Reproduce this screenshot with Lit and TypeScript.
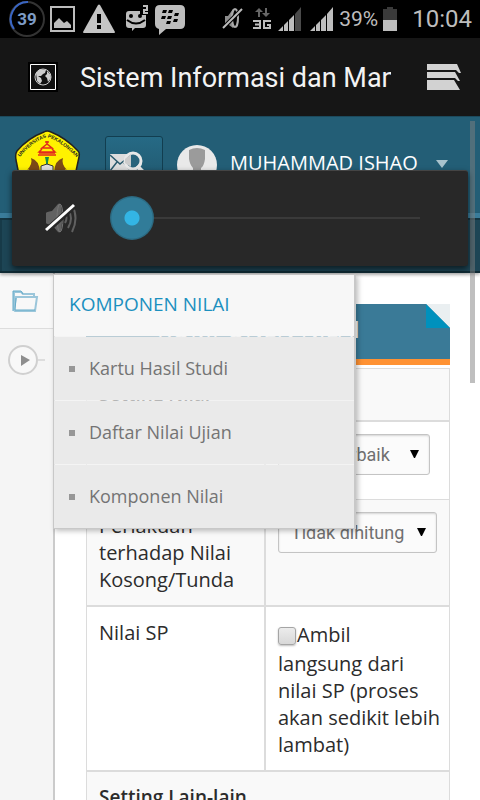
import { LitElement, html, css, svg } from "lit";
import { customElement } from "lit/decorators.js";

const signal = (last: string) => svg`
  <path d="M0 24 L5 19 V24Z M6 18 L10 14 V24 H6Z M11 13 L16 8 V24 H11Z" fill="#bdbdbd"/>
  <path d="M17 7 L23 0 V24 H17Z" fill=${last}/>`;

@customElement("status-bar")
export class StatusBar extends LitElement {
  static styles = css`
    :host {
      display: flex;
      align-items: center;
      justify-content: space-between;
      height: 38px;
      padding: 0 8px;
      background: #000;
      color: #bdbdbd;
      font-family: Roboto, sans-serif;
      flex: none;
    }
    .group {
      display: flex;
      align-items: center;
      gap: 5px;
    }
    svg {
      display: block;
      flex: none;
    }
    .percent {
      font-size: 21px;
      line-height: 38px;
    }
    .clock {
      font-size: 24px;
      line-height: 38px;
      padding-left: 10px;
    }
    .ring {
      font: 700 17px Roboto, sans-serif;
    }
  `;
  render() {
    return html`
      <div class="group">
        <svg width="37" height="38" viewBox="0 0 37 38">
          <circle cx="19" cy="19" r="17" fill="none" stroke="#333" stroke-width="2" />
          <path d="M20 2 A17 17 0 0 0 6 29" fill="none" stroke="#3a66c4" stroke-width="2" />
          <text class="ring" x="19" y="25" text-anchor="middle" fill="#7d9cc6">39</text>
        </svg>
        <svg width="25" height="26" viewBox="0 0 25 26">
          <path d="M1 1H24V25H1Z" fill="none" stroke="#bdbdbd" stroke-width="2" />
          <path d="M4 22V17L9 12L14 17L17 15L21 19V22Z" fill="#bdbdbd" />
        </svg>
        <svg width="40" height="30" viewBox="-1 0 40 30">
          <path d="M17 1Q18 0 19 1L34 28Q34 29 33 29H3Q2 29 2 28Z" fill="#c4c4c4" />
          <path d="M16 10H20V19H16Z M16 21H20V25H16Z" fill="#000" />
        </svg>
        <svg width="25" height="28" viewBox="0 0 25 28">
          <path d="M4 6H15V10H21V20Q21 23 18 23H10L7 26V23H4Q1 23 1 20V9Q1 6 4 6Z" fill="#bdbdbd" />
          <circle cx="6" cy="11" r="2" fill="#000" />
          <circle cx="15" cy="11" r="2" fill="#000" />
          <path d="M2 15Q11 22 20 15" fill="none" stroke="#000" stroke-width="2" />
          <path d="M18 1H22V5H19V8H23" fill="none" stroke="#bdbdbd" stroke-width="2" />
        </svg>
        <svg width="30" height="31" viewBox="0 0 30 31">
          <path d="M5 1H25Q30 1 30 6V20Q30 25 25 25H11L4 31V25Q0 24 0 20V6Q0 1 5 1Z" fill="#bdbdbd" />
          <path d="M8 6h4l-1 3h-4z M14 6h4l-1 3h-4z M7 12h4l-1 3h-4z M13 12h4l-1 3h-4z M20 9h4l-1 3h-4z M12 17h4l-1 3h-4z M19 15h4l-1 3h-4z" fill="#000" />
        </svg>
      </div>
      <div class="group">
        <svg width="26" height="26" viewBox="0 0 26 26">
          <path d="M3 10H6L11 3V22L7 19H3Z" fill="#8c8c8c" />
          <ellipse cx="13" cy="12" rx="3" ry="9" fill="none" stroke="#aaa" stroke-width="2" />
          <path d="M1 22L20 3" stroke="#000" stroke-width="4" />
          <path d="M1 22L20 3" stroke="#bdbdbd" stroke-width="2" />
        </svg>
        <svg width="19" height="22" viewBox="0 0 19 22">
          <path d="M6 0L10 4H7V9H5V4H2Z M13 9L9 5H12V0H14V5H17Z" fill="#666" />
          <path d="M0 13H7V20H0 M2 16.500H7 M18 13H11V20H17V17H14" fill="none" stroke="#bdbdbd" stroke-width="2" />
        </svg>
        <svg width="28" height="24" viewBox="-1 0 28 24">${signal("#4a4a4a")}</svg>
        <svg width="24" height="24" viewBox="0 0 24 24">${signal("#bdbdbd")}</svg>
        <span class="percent">39%</span>
        <svg width="14" height="24" viewBox="0 0 14 24">
          <path d="M0 2H4V0H10V2H14V13H0Z" fill="#3a3a3a" />
          <path d="M0 13H14V24H0Z" fill="#bdbdbd" />
        </svg>
        <span class="clock">10:04</span>
      </div>
    `;
  }
}

@customElement("volume-panel")
export class VolumePanel extends LitElement {
  static styles = css`
    :host {
      display: flex;
      align-items: center;
      box-sizing: border-box;
      height: 96px;
      padding: 0 26px 2px 32px;
      gap: 31px;
      background: #282828;
      border-top: 1px solid #444;
      border-radius: 3px;
      box-shadow: 0 3px 6px rgba(0, 0, 0, 0.6);
    }
    svg {
      flex: none;
    }
    input {
      appearance: none;
      flex: 1;
      min-width: 0;
      height: 44px;
      margin: 0;
      background: linear-gradient(#3a3a3a, #3a3a3a) center / calc(100% - 44px) 2px no-repeat;
    }
    input::-webkit-slider-thumb {
      appearance: none;
      width: 44px;
      height: 44px;
      border-radius: 50%;
      background: radial-gradient(circle, #33b5e5 7px, #317c99 8px, #317c99 20px, #2b6a82 21px);
    }
  `;
  render() {
    return html`
      <svg width="35" height="34" viewBox="0 0 35 34">
        <path d="M2 12Q2 11 8 10L14 3Q18 0 18 17Q18 34 14 31L8 24Q2 23 2 22Z" fill="#626262" />
        <ellipse cx="16" cy="17" rx="3" ry="14" fill="none" stroke="#757575" />
        <path d="M21 12Q24 17 21 22 M24 8Q30 17 24 27 M28 4Q35 17 28 31" fill="none" stroke="#606060" stroke-width="2" />
        <path d="M1 31L30 5" stroke="#282828" stroke-width="6" />
        <path d="M2 29L30 4" stroke="#fff" stroke-width="3" />
      </svg>
      <input type="range" min="0" max="15" value="0" aria-label="Volume" />
    `;
  }
}

@customElement("app-root")
export class AppRoot extends LitElement {
  static styles = css`
    :host {
      display: flex;
      flex-direction: column;
      height: 100vh;
      overflow: hidden;
      position: relative;
      background: #fff;
      color: #2c2c2c;
      font-family: "Open Sans", sans-serif;
      font-size: 20px;
      line-height: 27px;
    }
    button {
      border: 0;
      padding: 0;
      background: none;
      font: inherit;
    }
    svg {
      display: block;
      flex: none;
    }
    .appbar {
      flex: none;
      display: flex;
      align-items: center;
      height: 78px;
      padding: 0 18px 0 28px;
      background: #161616;
      color: #f3f3f3;
      font: 27px/40px Roboto, sans-serif;
    }
    .appbar .title {
      flex: 1;
      min-width: 0;
      margin: 0 35px 0 22px;
      padding-top: 2px;
      font: inherit;
      overflow: hidden;
      white-space: nowrap;
    }
    .web {
      position: relative;
      flex: 1;
      min-height: 0;
      display: flex;
      flex-direction: column;
    }
    .header {
      flex: none;
      display: flex;
      height: 97px;
      box-sizing: border-box;
      padding: 13px 30px 0 14px;
      background: #235e76;
      border-top: 1px solid #1c4a5d;
      overflow: hidden;
    }
    .mail {
      display: flex;
      align-items: flex-start;
      box-sizing: border-box;
      width: 58px;
      height: 58px;
      margin: 6px 14px 0 24px;
      padding: 14px 0 0 3px;
      border: 1px solid #123e50;
      border-radius: 3px;
      background: linear-gradient(#266a85, #205469);
    }
    .account {
      flex: 1;
      display: flex;
      align-items: flex-start;
      gap: 12px;
      padding-top: 15px;
      color: #fff;
      text-align: left;
      height: 60px;
    }
    .account .name {
      flex: 1;
      padding-top: 4px;
      white-space: nowrap;
    }
    .account .caret {
      margin: 15px 2px 0 0;
    }
    .nav {
      flex: none;
      box-sizing: border-box;
      height: 60px;
      border-top: 5px solid #3a7c9a;
      border-bottom: 2px solid #102b35;
      background: #1d4555;
      box-shadow: inset 0 2px #143440, inset 2px 0 #173a48, 0 2px 3px rgba(0, 0, 0, 0.3);
      z-index: 1;
    }
    .body {
      flex: 1;
      min-height: 0;
      display: flex;
      overflow: hidden;
    }
    .side {
      flex: none;
      box-sizing: border-box;
      width: 55px;
      border-right: 2px solid #cbcbcb;
      background: #f5f5f5;
    }
    .side button {
      display: block;
      box-sizing: border-box;
      width: 100%;
    }
    .side .folder {
      height: 56px;
      padding: 2px 0 0 12px;
      border-bottom: 1px solid #ddd;
      background: #f8f8f8;
    }
    .side .play {
      padding: 15px 0 0 8px;
    }
    .content {
      flex: 1;
      min-width: 0;
      padding: 31px 30px 0 31px;
    }
    .banner {
      display: flex;
      justify-content: space-between;
      box-sizing: border-box;
      height: 61px;
      margin-bottom: 3px;
      background: #3a7a97;
      border-bottom: 6px solid #ff9233;
    }
    .banner h2 {
      margin: 0;
      padding: 8px 0 0 71px;
      color: #fff;
      font-size: 24px;
      line-height: 34px;
      font-weight: 400;
      white-space: nowrap;
    }
    table {
      width: 100%;
      border-collapse: separate;
      border-spacing: 0;
      border: 1px solid #dcdcdc;
      border-bottom: 0;
      table-layout: fixed;
    }
    th,
    td {
      text-align: left;
      vertical-align: top;
      font-weight: 400;
      padding: 12px 8px 12px 12px;
      border-bottom: 2px solid #dcdcdc;
    }
    .names {
      width: 179px;
    }
    .label {
      border-right: 2px solid #dcdcdc;
    }
    .thin th,
    .thin td {
      border-bottom-width: 1px;
    }
    .shade {
      background: #f9f9f9;
    }
    .section {
      font-size: 19px;
      font-weight: 600;
    }
    .pick {
      position: relative;
      display: inline-block;
      vertical-align: top;
    }
    .pick svg {
      position: absolute;
      right: 11px;
      top: 15px;
      pointer-events: none;
    }
    select {
      appearance: none;
      box-sizing: border-box;
      height: 41px;
      padding: 0 31px 0 12px;
      border: 1px solid #c4c4c4;
      border-radius: 3px;
      background: #fbfbfb;
      color: #707070;
      font: 18px Roboto, sans-serif;
      box-shadow: inset 0 1px 2px rgba(0, 0, 0, 0.15);
    }
    .thin .pick {
      margin-bottom: 12px;
    }
    .thin select {
      padding-right: 38px;
    }
    .first {
      line-height: 31px;
    }
    input[type="checkbox"] {
      appearance: none;
      box-sizing: border-box;
      width: 18px;
      height: 18px;
      margin: 0 1px 0 0;
      vertical-align: -3px;
      border: 1px solid #a5a5a5;
      border-radius: 3px;
      background: linear-gradient(#ececec, #d8d8d8);
      box-shadow: 0 1px 2px rgba(0, 0, 0, 0.25);
    }
    .menu {
      position: absolute;
      z-index: 1;
      left: 53px;
      top: 158px;
      box-sizing: border-box;
      width: 303px;
      border: 1px solid #c8c8c8;
      border-right-width: 2px;
      box-shadow: 2px 2px 5px rgba(0, 0, 0, 0.25);
    }
    .menu h3 {
      margin: 0;
      padding: 15px 15px 18px;
      background: #f7f7f7;
      color: #1c90bf;
      font-size: 19px;
      line-height: 28px;
      font-weight: 400;
    }
    .menu ul {
      display: grid;
      gap: 1px;
      margin: 0;
      padding: 1px 0 0;
      list-style: none;
      background: rgba(240, 240, 240, 0.7);
    }
    .menu a {
      display: flex;
      align-items: center;
      gap: 14px;
      height: 63px;
      padding-left: 15px;
      background: #eaeaea;
      color: #747474;
      font-size: 18px;
      text-decoration: none;
    }
    .menu a::before {
      content: "";
      width: 6px;
      height: 6px;
      background: #979797;
    }
    volume-panel {
      position: absolute;
      z-index: 3;
      top: 54px;
      left: 12px;
      right: 12px;
    }
    .scroll {
      position: absolute;
      z-index: 2;
      top: 5px;
      right: 5px;
      width: 5px;
      height: 262px;
      background: rgba(128, 128, 128, 0.5);
    }
  `;

  private select(id: string, value: string) {
    return html`<span class="pick">
      <select id=${id}><option>${value}</option></select>
      <svg width="9" height="10" viewBox="0 0 9 10"><path d="M0 1H9L5 9H4Z" fill="#000" /></svg>
    </span>`;
  }

  render() {
    return html`
      <status-bar></status-bar>
      <header class="appbar">
        <svg width="30" height="30" viewBox="0 0 30 30">
          <path d="M1 1H29V29H1Z" fill="none" stroke="#000" stroke-width="2" />
          <path d="M2.500 2.500H27.500V27.500H2.500Z" fill="#111" stroke="#fff" />
          <circle cx="15" cy="15" r="8" fill="none" stroke="#ccc" />
          <path d="M8 11L12 7L18 8L17 11L15 12L13 14L10 14L13 16L14 19L12 22L9 19Z M19 9L22 12L23 16L20 20L19 16L17 14L19 12Z" fill="#ccc" />
        </svg>
        <h1 class="title">Sistem Informasi dan Manajemen</h1>
        <button aria-label="Jendela">
          <svg width="36" height="28" viewBox="0 0 36 28">
            <path d="M1 1H31L35 10H33L30 7H1Z M1 9H29L34 18H32L29 15H1Z M1 17H28L34 27H1Z" fill="#d2d2d2" />
          </svg>
        </button>
      </header>
      <div class="web">
        <header class="header">
          <svg width="67" height="70" viewBox="0 0 67 70">
            <path d="M30 2Q33 0 37 2Q52 8 64 21Q66 23 65 27L58 60Q33 76 8 60L2 30Q1 24 3 21Q14 8 30 2Z" fill="#fff200" stroke="#222" stroke-width="1.500" />
            <defs><path id="arc" d="M6 27Q18 12 33 7Q48 12 64 29" /></defs>
            <text font-family="Liberation Sans, sans-serif" font-size="5" font-weight="700" fill="#222">
              <textPath href="#arc" startOffset="0">UNIVERSITAS PEKALONGAN</textPath>
            </text>
            <path d="M33 11V14 M31 12H35 M33 14L28 18H38Z M28 19L25 22H41L38 19 M25 23H41 M24 25H42" fill="none" stroke="#e22a1c" stroke-width="1.500" />
            <path d="M31 27H35L34 32V38H32V32Z" fill="#148a4b" />
            <path d="M17 28Q25 30 26 42H14Q16 38 13 40Q19 34 17 28Z M49 28Q41 30 40 42H52Q50 38 53 40Q47 34 49 28Z" fill="#7b4a16" />
            <path d="M27 36L33 34L39 36V44H27Z" fill="#ddd" stroke="#333" />
          </svg>
          <button class="mail" aria-label="Cari pesan">
            <svg width="36" height="26" viewBox="0 0 36 26">
              <path d="M1 3H22V23H1Z" fill="#ddd" />
              <path d="M1 4L11 13L22 4 M1 20L8 11 M22 20L15 12" fill="none" stroke="#2b5a6d" stroke-width="1.500" />
              <circle cx="24" cy="10" r="8" fill="#2a647c" stroke="#e8e8e8" stroke-width="3" />
              <path d="M16 8L22 3V16L16 12Z" fill="#ccc" />
              <path d="M28 15L34 21" stroke="#e8e8e8" stroke-width="4" />
            </svg>
          </button>
          <button class="account">
            <svg width="41" height="41" viewBox="0 0 41 41">
              <circle cx="20" cy="20" r="20" fill="#e9e9e9" />
              <path d="M12 5Q20 1 28 5V14Q27 21 24 23V27L32 32H8L16 27V23Q13 20 12 14Z" fill="#9b9b9b" />
            </svg>
            <span class="name">MUHAMMAD ISHAQ</span>
            <svg class="caret" width="12" height="8" viewBox="0 0 12 8"><path d="M0 0H12L6 8Z" fill="#a9c3cd" /></svg>
          </button>
        </header>
        <nav class="nav"></nav>
        <div class="body">
          <aside class="side">
            <button class="folder" aria-label="Berkas">
              <svg width="27" height="23" viewBox="0 0 27 23">
                <path d="M2 20V2H9L11 4H22V7 M2 20L4 7H25L23 21H3Z" fill="none" stroke="#9bc6da" stroke-width="2" />
                <path d="M1 21V1H9L11 4 M4 8L3 20H23" fill="none" stroke="#65abc9" />
              </svg>
            </button>
            <button class="play" aria-label="Putar">
              <svg width="38" height="32" viewBox="0 0 38 32">
                <circle cx="15" cy="16" r="14" fill="#f8f8f8" stroke="#d0d0d0" stroke-width="2" />
                <path d="M30 16H37" stroke="#ddd" stroke-width="2" />
                <path d="M13 11L22 16L13 22Z" fill="#8e8e8e" />
              </svg>
            </button>
          </aside>
          <main class="content">
            <div class="banner">
              <h2>KOMPONEN NILAI</h2>
              <svg width="24" height="24" viewBox="0 0 24 24">
                <path d="M0 0H24V24Z" fill="#eaeff1" />
                <path d="M0 0L24 24H0Z" fill="#0091bd" />
              </svg>
            </div>
            <table>
              <colgroup><col class="names" /><col /></colgroup>
              <tbody>
                <tr class="shade"><th class="section" colspan="2">Setting Nilai</th></tr>
                <tr class="thin">
                  <th class="label"><label for="use">Nilai Dipakai</label></th>
                  <td>${this.select("use", "Nilai Terbaik")}</td>
                </tr>
                <tr class="shade">
                  <th class="label"><label for="empty">Perlakuan terhadap Nilai Kosong/Tunda</label></th>
                  <td>${this.select("empty", "Tidak dihitung")}</td>
                </tr>
                <tr>
                  <th class="label">Nilai SP</th>
                  <td><label><span class="first"><input type="checkbox" />Ambil</span><br />langsung dari nilai SP (proses akan sedikit lebih lambat)</label></td>
                </tr>
                <tr class="shade"><th class="section" colspan="2">Setting Lain-lain</th></tr>
              </tbody>
            </table>
          </main>
        </div>
        <section class="menu">
          <h3>KOMPONEN NILAI</h3>
          <ul>
            <li><a href="#khs">Kartu Hasil Studi</a></li>
            <li><a href="#ujian">Daftar Nilai Ujian</a></li>
            <li><a href="#komponen">Komponen Nilai</a></li>
          </ul>
        </section>
        <volume-panel></volume-panel>
        <div class="scroll"></div>
      </div>
    `;
  }
}
